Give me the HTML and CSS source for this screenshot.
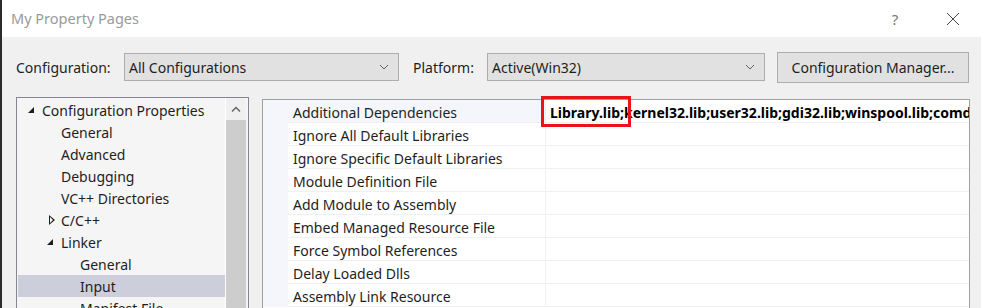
FILE: index.html
```html
<!DOCTYPE html>
<html lang="en">
<head>
    <meta charset="UTF-8">
    <title>My Property Pages</title>
    <link rel="stylesheet" href="styles.css">
</head>
<body>

    <div class="window">
        <!-- Title bar -->
        <div class="titlebar">
            <span class="title">My Property Pages</span>
            <span class="caption-btn help">?</span>
            <span class="caption-btn close">
                <svg width="14" height="14" viewBox="0 0 14 14"><path d="M1 1 L13 13 M13 1 L1 13" stroke="#444" stroke-width="1" fill="none"/></svg>
            </span>
        </div>

        <!-- Configuration / platform selectors -->
        <div class="toolbar">
            <span class="label label-config">Configuration:</span>
            <div class="combo combo-config">
                <span>All Configurations</span>
                <svg class="chev" width="10" height="6" viewBox="0 0 10 6"><path d="M1 1 L5 5 L9 1" stroke="#606060" fill="none"/></svg>
            </div>
            <span class="label label-platform">Platform:</span>
            <div class="combo combo-platform">
                <span>Active(Win32)</span>
                <svg class="chev" width="10" height="6" viewBox="0 0 10 6"><path d="M1 1 L5 5 L9 1" stroke="#606060" fill="none"/></svg>
            </div>
            <button class="manager-btn">Configuration Manager...</button>
        </div>

        <div class="main">
            <!-- Tree of property pages -->
            <div class="tree">
                <ul class="tree-list">
                    <li class="lvl0"><span class="toggle open"></span>Configuration Properties</li>
                    <li class="lvl1"><span class="toggle"></span>General</li>
                    <li class="lvl1"><span class="toggle"></span>Advanced</li>
                    <li class="lvl1"><span class="toggle"></span>Debugging</li>
                    <li class="lvl1"><span class="toggle"></span>VC++ Directories</li>
                    <li class="lvl1"><span class="toggle closed"></span>C/C++</li>
                    <li class="lvl1"><span class="toggle open"></span>Linker</li>
                    <li class="lvl2"><span class="toggle"></span>General</li>
                    <li class="lvl2 selected"><span class="toggle"></span>Input</li>
                    <li class="lvl2"><span class="toggle"></span>Manifest File</li>
                </ul>
                <div class="scrollbar">
                    <div class="scroll-up">
                        <svg width="10" height="6" viewBox="0 0 10 6"><path d="M1 5.5 L5 1.5 L9 5.5" stroke="#606060" stroke-width="1.4" fill="none"/></svg>
                    </div>
                    <div class="scroll-thumb"></div>
                </div>
            </div>

            <!-- Property grid -->
            <div class="grid">
                <div class="row first">
                    <div class="margin"></div>
                    <div class="name">Additional Dependencies</div>
                    <div class="value">Library.lib;kernel32.lib;user32.lib;gdi32.lib;winspool.lib;comdlg32.lib;advapi32.lib;shell32.lib</div>
                </div>
                <div class="row"><div class="margin"></div><div class="name">Ignore All Default Libraries</div><div class="value"></div></div>
                <div class="row"><div class="margin"></div><div class="name">Ignore Specific Default Libraries</div><div class="value"></div></div>
                <div class="row"><div class="margin"></div><div class="name">Module Definition File</div><div class="value"></div></div>
                <div class="row"><div class="margin"></div><div class="name">Add Module to Assembly</div><div class="value"></div></div>
                <div class="row"><div class="margin"></div><div class="name">Embed Managed Resource File</div><div class="value"></div></div>
                <div class="row"><div class="margin"></div><div class="name">Force Symbol References</div><div class="value"></div></div>
                <div class="row"><div class="margin"></div><div class="name">Delay Loaded Dlls</div><div class="value"></div></div>
                <div class="row"><div class="margin"></div><div class="name">Assembly Link Resource</div><div class="value"></div></div>
                <!-- red annotation box drawn over the first value -->
                <span class="highlight"></span>
            </div>
        </div>
    </div>

</body>
</html>
```

FILE: styles.css
```css
body {
    margin: 0;
    padding: 0;
    font-family: "Noto Sans", "Open Sans", sans-serif;
    font-size: 14px;
    color: #1e1e1e;
    background-color: #f0f0f0;
    overflow: hidden;
}
.window {
    width: 979px;
    height: 308px;
    border-left: 2px solid #2b2b2b;
    background-color: #f0f0f0;
    overflow: hidden;
}
.titlebar {
    height: 37px;
    background-color: white;
    display: flex;
    align-items: center;
}
.title {
    margin-left: 9px;
    margin-top: -1px;
    font-size: 14.5px;
    color: #9a9a9a;
    flex: 1;
}
.caption-btn {
    display: flex;
    align-items: center;
    justify-content: center;
    color: #777;
    font-size: 15px;
}
.help {
    width: 20px;
    margin-right: 38px;
}
.close {
    width: 20px;
    margin-right: 18px;
}
.toolbar {
    display: flex;
    align-items: center;
    margin-top: 16px;
    padding-left: 14px;
    height: 28px;
}
.label {
    white-space: nowrap;
}
.label-config {
    width: 108px;
}
.label-platform {
    width: 74px;
    margin-left: 14px;
}
.combo {
    box-sizing: border-box;
    height: 28px;
    background-color: #e1e1e1;
    border: 1px solid #adadad;
    display: flex;
    align-items: center;
    padding-left: 4px;
}
.combo span {
    flex: 1;
}
.combo .chev {
    margin-right: 9px;
}
.combo-config {
    width: 275px;
}
.combo-platform {
    width: 278px;
}
.manager-btn {
    box-sizing: border-box;
    margin-left: 12px;
    width: 192px;
    height: 31px;
    background-color: #e1e1e1;
    border: 1px solid #adadad;
    font-family: inherit;
    font-size: 14px;
    color: #1e1e1e;
    padding: 0;
}
.main {
    display: flex;
    align-items: flex-start;
    margin-top: 16px;
    padding-left: 14px;
}
.tree {
    box-sizing: border-box;
    width: 233px;
    height: 260px;
    border: 1px solid #828790;
    background-color: #f5f5f5;
    display: flex;
}
.tree-list {
    list-style: none;
    margin: 0;
    padding: 1px 0 0 1px;
    width: 208px;
    border-right: 1px solid white;
}
.tree-list li {
    box-sizing: border-box;
    height: 22px;
    padding-top: 2px;
    line-height: 20px;
    display: flex;
    align-items: center;
    white-space: nowrap;
}
.tree-list li.selected {
    background-color: #cccedb;
}
.toggle {
    display: inline-block;
    width: 15px;
    height: 20px;
    position: relative;
}
.toggle.open::before {
    content: "";
    position: absolute;
    left: 1px;
    top: 6px;
    border-style: solid;
    border-width: 0 0 6px 6px;
    border-color: transparent transparent #1e1e1e transparent;
}
.toggle.closed::before {
    content: "";
    position: absolute;
    left: 3px;
    top: 4px;
    width: 0;
    height: 0;
    border-style: solid;
    border-width: 5px 0 5px 6px;
    border-color: transparent transparent transparent #1e1e1e;
}
.toggle.closed::after {
    content: "";
    position: absolute;
    left: 4px;
    top: 6px;
    border-style: solid;
    border-width: 3px 0 3px 3.5px;
    border-color: transparent transparent transparent #f5f5f5;
}
.lvl0 {
    padding-left: 9px;
}
.lvl1 {
    padding-left: 28px;
}
.lvl2 {
    padding-left: 47px;
}
.scrollbar {
    width: 20px;
    background-color: #f0f0f0;
    margin-right: 2px;
}
.scroll-up {
    height: 22px;
    display: flex;
    align-items: center;
    justify-content: center;
}
.scroll-thumb {
    background-color: #cdcdcd;
    height: 240px;
}
.grid {
    box-sizing: border-box;
    position: relative;
    margin-left: 13px;
    margin-top: 2px;
    width: 708px;
    height: 260px;
    border: 1px solid #a0a0a0;
    background-color: white;
}
.row {
    display: flex;
    height: 23px;
}
.row .margin {
    width: 25px;
    background-color: #f4f6fb;
}
.row .name,
.row .value {
    box-sizing: border-box;
    height: 23px;
    padding-top: 3px;
    line-height: 19px;
    border-bottom: 1px solid #f0f0f0;
    white-space: nowrap;
}
.row .name {
    width: 258px;
    padding-left: 5px;
    border-right: 1px solid #f0f0f0;
}
.row.first .name {
    background-color: #f4f6fb;
}
.row .value {
    flex: 1;
    padding-left: 4px;
    overflow: hidden;
    font-weight: bold;
    color: #000;
}
.highlight {
    position: absolute;
    left: 278px;
    top: -4px;
    width: 84px;
    height: 25px;
    border: 3px solid #e8141c;
}
```
